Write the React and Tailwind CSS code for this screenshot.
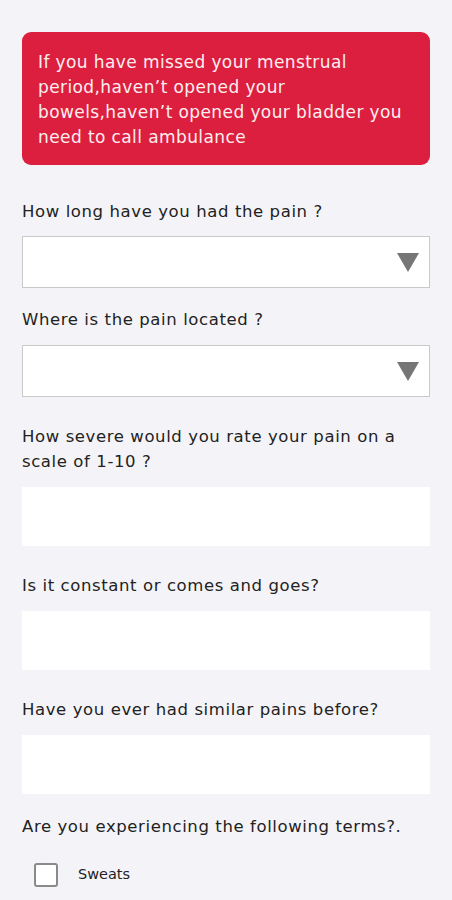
const font = { fontFamily: '"DejaVu Sans", "Open Sans", sans-serif' };

function Label({ children, className = "" }) {
	return (
		<p
			className={`text-[16.5px] leading-[25px] tracking-[0.6px] text-[#222222] ${className}`}
		>
			{children}
		</p>
	);
}

function SelectBox({ className = "" }) {
	return (
		<div
			className={`flex h-[52px] items-center justify-end border border-[#c9c9c9] bg-white pr-[10px] ${className}`}
		>
			<svg width="22" height="19" viewBox="0 0 22 19">
				<polygon points="0,0 22,0 11,19" fill="#767676" />
			</svg>
		</div>
	);
}

function TextBox({ className = "" }) {
	return <div className={`h-[59px] bg-white ${className}`} />;
}

export default function App() {
	return (
		<div
			className="min-h-[900px] w-[452px] bg-[#f4f4f8] px-[22px] pt-[32px]"
			style={font}
		>
			<div className="rounded-[9px] bg-[#dc1f3e] px-4 pt-[18px] pb-[15px] text-[17px] leading-[25px] tracking-[0.4px] text-[#fdeef0]">
				If you have missed your menstrual
				<br />
				period,haven’t opened your
				<br />
				bowels,haven’t opened your bladder you
				<br />
				need to call ambulance
			</div>

			<Label className="mt-[34px]">How long have you had the pain ?</Label>
			<SelectBox className="mt-[12px]" />

			<Label className="mt-[19px]">Where is the pain located ?</Label>
			<SelectBox className="mt-[13px]" />

			<Label className="mt-[27px]">
				How severe would you rate your pain on a
				<br />
				scale of 1-10 ?
			</Label>
			<TextBox className="mt-[13px]" />

			<Label className="mt-[27px]">Is it constant or comes and goes?</Label>
			<TextBox className="mt-[13px]" />

			<Label className="mt-[27px]">Have you ever had similar pains before?</Label>
			<TextBox className="mt-[13px]" />

			<Label className="mt-[20px]">
				Are you experiencing the following terms?.
			</Label>
			<label className="mt-[24px] flex items-center pl-[12px]">
				<span className="h-[24px] w-[24px] rounded-[3px] border-2 border-[#8a8a8a] bg-white" />
				<span className="ml-[20px] text-[14.5px] text-[#222222]">Sweats</span>
			</label>
		</div>
	);
}
